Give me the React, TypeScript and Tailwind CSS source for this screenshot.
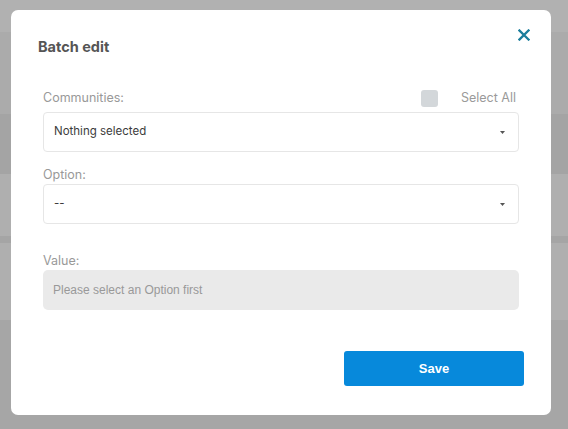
import React from 'react';

const bands = [
    { h: 'h-[32px]', bg: 'bg-[#b1b1b1]' },
    { h: 'h-[82px]', bg: 'bg-[#ababab]' },
    { h: 'h-[60px]', bg: 'bg-[#a4a4a4]' },
    { h: 'h-[62px]', bg: 'bg-[#afafaf]' },
    { h: 'h-[7px]', bg: 'bg-[#a5a5a5]' },
    { h: 'h-[77px]', bg: 'bg-[#afafaf]' },
    { h: 'h-[109px]', bg: 'bg-[#a6a6a6]' },
];

const Caret = () => (
    <svg width="5" height="3" viewBox="0 0 5 3" className="shrink-0">
        <path d="M0 0h5L2.5 3z" fill="#555" />
    </svg>
);

const SelectBox: React.FC<{ text: string }> = ({ text }) => (
    <div className="h-[40px] flex items-center justify-between pl-[10px] pr-[13px] border border-[#e6e6e6] rounded-[4px] bg-white">
        <span className="text-[11.5px] text-[#3c3c3c]">{text}</span>
        <Caret />
    </div>
);

export default function App() {
    return (
        <div className="relative w-[568px] h-[429px] overflow-hidden" style={{ fontFamily: 'Inter, "Noto Sans", sans-serif' }}>
            {/* page behind the overlay */}
            <div className="flex flex-col">
                {bands.map((b, i) => (
                    <div key={i} className={`${b.h} ${b.bg}`} />
                ))}
            </div>

            <div className="absolute left-[11px] top-[10px] w-[540px] bg-white rounded-[7px] flex flex-col">
                <button className="absolute right-[21px] top-[19px]">
                    <svg width="12" height="12" viewBox="0 0 12 12">
                        <path d="M1.5 1.5l9 9M10.5 1.5l-9 9" stroke="#1a7d9c" strokeWidth="2.3" strokeLinecap="square" />
                    </svg>
                </button>

                <h2 className="pt-[27px] pl-[27px] h-[47px] leading-[20px] text-[14.5px] font-bold text-[#555]">Batch edit</h2>

                <div className="px-[32px] flex flex-col">
                    <div className="mt-[31px] h-[20px] flex items-center justify-between">
                        <span className="text-[12.5px] text-[#999]">Communities:</span>
                        <div className="flex items-center">
                            <span className="w-[17px] h-[17px] rounded-[3px] bg-[#d3d7da]" />
                            <span className="ml-[23px] mr-[3px] text-[12.5px] text-[#9a9a9a]">Select All</span>
                        </div>
                    </div>
                    <div className="mt-[4px]">
                        <SelectBox text="Nothing selected" />
                    </div>

                    <label className="mt-[15px] h-[16px] leading-[16px] text-[12.5px] text-[#999]">Option:</label>
                    <div className="mt-[1px]">
                        <SelectBox text="--" />
                    </div>

                    <label className="mt-[29px] h-[16px] leading-[16px] text-[12.5px] text-[#999]">Value:</label>
                    <div className="mt-[1px] h-[40px] flex items-center pl-[10px] rounded-[5px] bg-[#eaeaea]">
                        <span className="text-[12px] text-[#999]" style={{ fontFamily: '"Liberation Sans", Arial, sans-serif' }}>
                            Please select an Option first
                        </span>
                    </div>
                </div>

                <div className="mt-[41px] pb-[29px] pr-[27px] flex justify-end">
                    <button
                        className="w-[180px] h-[35px] rounded-[3px] bg-[#0789db] text-white text-[13px] font-bold"
                        style={{ fontFamily: '"Liberation Sans", Arial, sans-serif' }}
                    >
                        Save
                    </button>
                </div>
            </div>
        </div>
    );
}
